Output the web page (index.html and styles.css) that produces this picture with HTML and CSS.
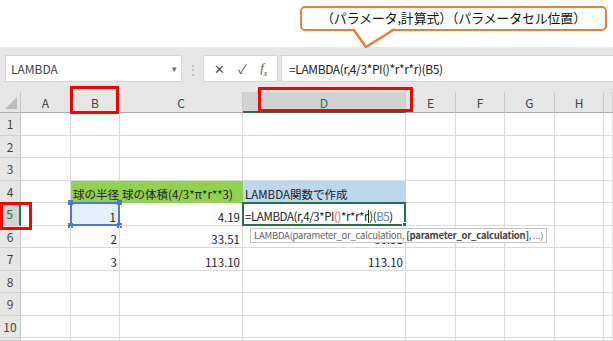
FILE: index.html
```html
<!DOCTYPE html>
<html lang="ja">
<head>
  <meta charset="UTF-8" />
  <title>LAMBDA</title>
  <link rel="stylesheet" href="styles.css">
</head>
<body>
  <div class="top">
    <div class="callout">（パラメータ,計算式）（パラメータセル位置）</div>
    <svg class="tail" width="613" height="50">
      <polygon points="353,27 366,47 395,27" fill="#fff" />
      <polyline points="353,29 366,47 395,29" fill="none" stroke="#ed7d31" stroke-width="2.5" stroke-linejoin="round" />
    </svg>
  </div>

  <div class="toolbar">
    <div class="namebox"><span>LAMBDA</span><span class="drop">▾</span></div>
    <div class="grip">⋮</div>
    <div class="fxbtns">
      <span class="btn">✕</span>
      <span class="btn">✓</span>
      <span class="btn fx">f<sub>x</sub></span>
    </div>
    <div class="formula">=LAMBDA(r,4/3*PI()*r*r*r)(B5)</div>
  </div>

  <div class="sheet">
    <div class="row head">
      <div class="rh corner"><svg width="14" height="14"><polygon points="13,1 13,13 1,13" fill="#bdbdbd" /></svg></div>
      <div class="ch ca">A</div>
      <div class="ch cb">B</div>
      <div class="ch cc">C</div>
      <div class="ch cd on">D</div>
      <div class="ch ce">E</div>
      <div class="ch cf">F</div>
      <div class="ch cg">G</div>
      <div class="ch chh">H</div>
      <div class="ch ci"></div>
      <div class="mark mark-b"></div>
      <div class="mark mark-d"></div>
    </div>
    <div class="row"><div class="rh">1</div><div class="c ca"></div><div class="c cb"></div><div class="c cc"></div><div class="c cd"></div><div class="c ce"></div><div class="c cf"></div><div class="c cg"></div><div class="c chh"></div><div class="c ci"></div></div>
    <div class="row"><div class="rh">2</div><div class="c ca"></div><div class="c cb"></div><div class="c cc"></div><div class="c cd"></div><div class="c ce"></div><div class="c cf"></div><div class="c cg"></div><div class="c chh"></div><div class="c ci"></div></div>
    <div class="row"><div class="rh">3</div><div class="c ca"></div><div class="c cb"></div><div class="c cc"></div><div class="c cd"></div><div class="c ce"></div><div class="c cf"></div><div class="c cg"></div><div class="c chh"></div><div class="c ci"></div></div>
    <div class="row">
      <div class="rh">4</div><div class="c ca"></div>
      <div class="c cb green">球の半径</div>
      <div class="c cc green">球の体積(4/3*π*r**3)</div>
      <div class="c cd blue">LAMBDA関数で作成</div>
      <div class="c ce"></div><div class="c cf"></div><div class="c cg"></div><div class="c chh"></div><div class="c ci"></div>
    </div>
    <div class="row">
      <div class="rh on">5</div><div class="c ca"></div>
      <div class="c cb num ref">1<i class="h h1"></i><i class="h h2"></i><i class="h h3"></i><i class="h h4"></i></div>
      <div class="c cc num">4.19</div>
      <div class="c cd edit"><span>=LAMBDA(r,4/3*PI<span class="paren">()</span>*r*r*r<span class="caret"></span>)(<span class="refb">B5</span>)</span><i class="fill"></i>
        <div class="tip">LAMBDA(parameter_or_calculation, <b>[parameter_or_calculation]</b>, ...)</div>
      </div>
      <div class="c ce"></div><div class="c cf"></div><div class="c cg"></div><div class="c chh"></div><div class="c ci"></div>
      <div class="mark mark-5"></div>
    </div>
    <div class="row"><div class="rh">6</div><div class="c ca"></div><div class="c cb num">2</div><div class="c cc num">33.51</div><div class="c cd num">33.51</div><div class="c ce"></div><div class="c cf"></div><div class="c cg"></div><div class="c chh"></div><div class="c ci"></div></div>
    <div class="row"><div class="rh">7</div><div class="c ca"></div><div class="c cb num">3</div><div class="c cc num">113.10</div><div class="c cd num">113.10</div><div class="c ce"></div><div class="c cf"></div><div class="c cg"></div><div class="c chh"></div><div class="c ci"></div></div>
    <div class="row"><div class="rh">8</div><div class="c ca"></div><div class="c cb"></div><div class="c cc"></div><div class="c cd"></div><div class="c ce"></div><div class="c cf"></div><div class="c cg"></div><div class="c chh"></div><div class="c ci"></div></div>
    <div class="row"><div class="rh">9</div><div class="c ca"></div><div class="c cb"></div><div class="c cc"></div><div class="c cd"></div><div class="c ce"></div><div class="c cf"></div><div class="c cg"></div><div class="c chh"></div><div class="c ci"></div></div>
    <div class="row"><div class="rh">10</div><div class="c ca"></div><div class="c cb"></div><div class="c cc"></div><div class="c cd"></div><div class="c ce"></div><div class="c cf"></div><div class="c cg"></div><div class="c chh"></div><div class="c ci"></div></div>
    <div class="row last"><div class="rh"></div><div class="c ca"></div><div class="c cb"></div><div class="c cc"></div><div class="c cd"></div><div class="c ce"></div><div class="c cf"></div><div class="c cg"></div><div class="c chh"></div><div class="c ci"></div></div>
  </div>
</body>
</html>
```

FILE: styles.css
```css
* {
  margin: 0;
  padding: 0;
  box-sizing: border-box;
}

body {
  width: 613px;
  height: 341px;
  overflow: hidden;
  background: #fff;
  color: #222;
  font-family: "Noto Sans CJK JP", "Noto Sans", sans-serif;
}

/* callout */
.top {
  position: relative;
  height: 47px;
  padding: 6px 0 0 300px;
}

.callout {
  width: 307px;
  height: 25px;
  border: 2.5px solid #ed7d31;
  border-radius: 5px;
  font-size: 13px;
  line-height: 19px;
  text-align: center;
  color: #111;
  letter-spacing: -0.2px;
}

.tail {
  position: absolute;
  left: 0;
  top: 0;
}

/* formula bar */
.toolbar {
  height: 45px;
  background: #e6e6e6;
  display: flex;
  align-items: flex-start;
  padding: 8px 0 0 5px;
}

.namebox, .fxbtns, .formula {
  height: 27px;
  background: #fff;
  border: 1px solid #d6d6d6;
  display: flex;
  align-items: center;
}

.namebox {
  width: 177px;
  justify-content: space-between;
  padding: 0 4px 0 5px;
  font-size: 12px;
  color: #444;
}

.drop {
  font-size: 9px;
  color: #666;
}

.grip {
  width: 21px;
  text-align: center;
  color: #b0b0b0;
  font-size: 12px;
  line-height: 27px;
}

.fxbtns {
  width: 75px;
  justify-content: space-around;
  padding: 0 3px;
  color: #555;
  font-size: 13px;
}

.fx {
  font-family: "Liberation Serif", serif;
  font-style: italic;
  font-size: 13px;
}

.fx sub {
  font-size: 8px;
}

.formula {
  flex: 1;
  margin-left: 3px;
  padding-left: 7px;
  border-right: none;
  font-size: 12px;
  color: #222;
  letter-spacing: -0.4px;
}

/* sheet */
.sheet {
  font-size: 11.5px;
}

.row {
  position: relative;
  display: flex;
  height: 22.5px;
}

.row.head {
  height: 21px;
  background: #e6e6e6;
}

.row.last {
  height: 3px;
}

.rh {
  width: 21px;
  flex: none;
  background: #e6e6e6;
  border-right: 1px solid #c6c6c6;
  border-bottom: 1px solid #d0d0d0;
  color: #444;
  font-size: 12px;
  text-align: center;
  line-height: 22px;
}

.rh.on {
  background: #d2d2d2;
  color: #217346;
  border-right: 2px solid #217346;
}

.corner {
  display: flex;
  align-items: flex-end;
  justify-content: flex-end;
  padding: 0 2px 2px 0;
  border-bottom: 1px solid #ababab;
}

.ch {
  flex: none;
  text-align: center;
  font-size: 12px;
  color: #444;
  line-height: 21px;
  border-right: 1px solid #c9c9c9;
  border-bottom: 1px solid #ababab;
}

.ch.on {
  background: #d2d2d2;
  color: #217346;
  border-bottom: 2px solid #217346;
}

.ca { width: 50px; }
.cb { width: 49px; }
.cc { width: 123px; }
.cd { width: 163px; }
.ce { width: 50px; }
.cf { width: 49px; }
.cg { width: 50px; }
.chh { width: 49px; }
.ci { flex: 1 !important; }

.c {
  position: relative;
  flex: none;
  display: flex;
  align-items: flex-end;
  border-right: 1px solid #dadada;
  border-bottom: 1px solid #dadada;
  padding: 0 2px 1px;
  line-height: 14px;
  white-space: nowrap;
  color: #222;
}

.num {
  justify-content: flex-end;
}

.green {
  background: #92d050;
  border-color: #92d050;
}

.cb.green {
  border-right-color: #92d050;
}

.blue {
  background: #bdd7ee;
  border-color: #bdd7ee;
}

/* reference highlight on B5 */
.ref {
  background: #e6eef9;
  border: 2px solid #4a7bd0;
  margin: -1px 0 0 -1px;
  width: 50px;
  height: 23.5px;
  padding-bottom: 0;
}

.h {
  position: absolute;
  width: 5px;
  height: 5px;
  background: #4a7bd0;
}

.h1 { left: -4px; top: -4px; }
.h2 { right: -4px; top: -4px; }
.h3 { left: -4px; bottom: -4px; }
.h4 { right: -4px; bottom: -4px; }

/* cell in edit mode */
.edit {
  border: 2px solid #217346;
  margin: -1px 0 0 -1px;
  width: 164px;
  height: 23.5px;
  padding: 0 0 1px 1px;
  letter-spacing: -0.4px;
  overflow: visible;
  z-index: 2;
}

.paren {
  color: #e05a5a;
}

.refb {
  color: #4a7bd0;
}

.caret {
  display: inline-block;
  width: 1px;
  height: 13px;
  background: #222;
  vertical-align: -2px;
}

.fill {
  position: absolute;
  right: -3px;
  bottom: -3px;
  width: 5px;
  height: 5px;
  background: #217346;
  border: 1px solid #fff;
}

.tip {
  position: absolute;
  left: 6px;
  top: 24px;
  height: 15px;
  padding: 0 3px;
  background: #fff;
  border: 1px solid #c6c6c6;
  font-size: 9.5px;
  line-height: 13px;
  color: #666;
  letter-spacing: -0.25px;
}

.tip b {
  font-weight: 600;
  color: #444;
}

/* red marker boxes */
.mark {
  position: absolute;
  border: 3px solid #ff0000;
  z-index: 3;
}

.mark-b {
  left: 70px;
  top: -6px;
  width: 49px;
  height: 28px;
}

.mark-d {
  left: 258px;
  top: -5px;
  width: 155px;
  height: 25px;
}

.mark-5 {
  left: 0;
  top: -1px;
  width: 32px;
  height: 28px;
}
```
